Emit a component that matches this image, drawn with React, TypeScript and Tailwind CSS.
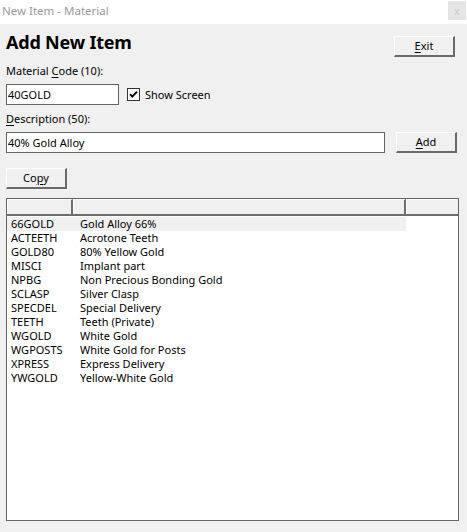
import React from "react";

const rows: [string, string][] = [
  ["66GOLD", "Gold Alloy 66%"],
  ["ACTEETH", "Acrotone Teeth"],
  ["GOLD80", "80% Yellow Gold"],
  ["MISCI", "Implant part"],
  ["NPBG", "Non Precious Bonding Gold"],
  ["SCLASP", "Silver Clasp"],
  ["SPECDEL", "Special Delivery"],
  ["TEETH", "Teeth (Private)"],
  ["WGOLD", "White Gold"],
  ["WGPOSTS", "White Gold for Posts"],
  ["XPRESS", "Express Delivery"],
  ["YWGOLD", "Yellow-White Gold"],
];

function Btn({ children, className = "" }: { children: React.ReactNode; className?: string }) {
  return (
    <div
      className={
        "h-[21px] w-[61px] bg-[#f0f0f0] border-t border-l border-t-white border-l-white border-b-2 border-r-2 border-b-[#696969] border-r-[#696969] flex items-center justify-center text-[11px] leading-[14px] text-black " +
        className
      }
    >
      {children}
    </div>
  );
}

export default function App() {
  return (
    <div
      className="w-[467px] h-[532px] bg-[#f0f0f0] overflow-hidden text-black"
      style={{ fontFamily: '"Noto Sans", "Open Sans", sans-serif' }}
    >
      {/* title bar */}
      <div className="h-[24px] bg-white flex items-start justify-between">
        <div className="pl-[2px] pt-[3px] text-[11.5px] leading-[16px] text-[#9a9a9a]">New Item - Material</div>
        <div className="mt-[1px] mr-[1px] w-[18px] h-[19px] bg-[#e5e5e5] flex items-center justify-center text-[10px] leading-[10px] text-[#c8c8c8]">
          x
        </div>
      </div>

      <div className="px-[6px]">
        {/* heading row */}
        <div className="flex items-start justify-between h-[33px]">
          <div className="mt-[6px] text-[18px] leading-[24px] font-bold tracking-[-0.2px]">Add New Item</div>
          <Btn className="mt-[12px] mr-[6px]">
            <span>
              <span className="underline underline-offset-2">E</span>xit
            </span>
          </Btn>
        </div>

        {/* material code label */}
        <div className="mt-[6px] text-[11px] leading-[16px]">
          Material <span className="underline underline-offset-2">C</span>ode (10):
        </div>

        {/* code input + checkbox */}
        <div className="mt-[5px] flex items-center h-[21px]">
          <div className="w-[113px] h-[21px] bg-white border border-[#646464] pl-[1px] text-[11px] leading-[19px]">
            40GOLD
          </div>
          <div className="ml-[8px] w-[13px] h-[13px] bg-white border border-[#333333] flex items-center justify-center">
            <svg width="11" height="11" viewBox="0 0 11 11">
              <path d="M2 5.2 L4.3 7.6 L9 2.6" fill="none" stroke="#000" strokeWidth="1.8" />
            </svg>
          </div>
          <div className="ml-[5px] text-[11px] leading-[16px]">Show Screen</div>
        </div>

        {/* description label */}
        <div className="mt-[6px] text-[11px] leading-[16px]">
          <span className="underline underline-offset-2">D</span>escription (50):
        </div>

        {/* description input + Add */}
        <div className="mt-[5px] flex items-center">
          <div className="w-[379px] h-[21px] bg-white border border-[#646464] pl-[1px] text-[11px] leading-[19px]">
            40% Gold Alloy
          </div>
          <Btn className="ml-[11px]">
            <span>
              <span className="underline underline-offset-2">A</span>dd
            </span>
          </Btn>
        </div>

        {/* Copy */}
        <Btn className="mt-[15px]">
          <span>
            Co<span className="underline underline-offset-2">p</span>y
          </span>
        </Btn>

        {/* list */}
        <div className="mt-[9px] w-[453px] h-[323px] bg-white border border-[#646464] flex flex-col">
          <div className="h-[17px] flex bg-[#f0f0f0] border-b-2 border-b-[#6d6d6d]">
            <div className="w-[66px] border-t border-l border-t-white border-l-white border-r-2 border-r-[#6d6d6d]" />
            <div className="w-[333px] border-t border-l border-t-white border-l-white border-r-2 border-r-[#6d6d6d]" />
            <div className="flex-1 border-t border-l border-t-white border-l-white" />
          </div>
          <div className="flex flex-col pt-[1px]">
            {rows.map(([code, desc], i) => (
              <div
                key={code}
                className={
                  "h-[14px] w-[399px] flex items-center pl-[4px] text-[11px] leading-[14px] whitespace-nowrap " +
                  (i === 0 ? "bg-[#f0f0f0]" : "")
                }
              >
                <span className="w-[69px]">{code}</span>
                <span>{desc}</span>
              </div>
            ))}
          </div>
        </div>
      </div>
    </div>
  );
}
